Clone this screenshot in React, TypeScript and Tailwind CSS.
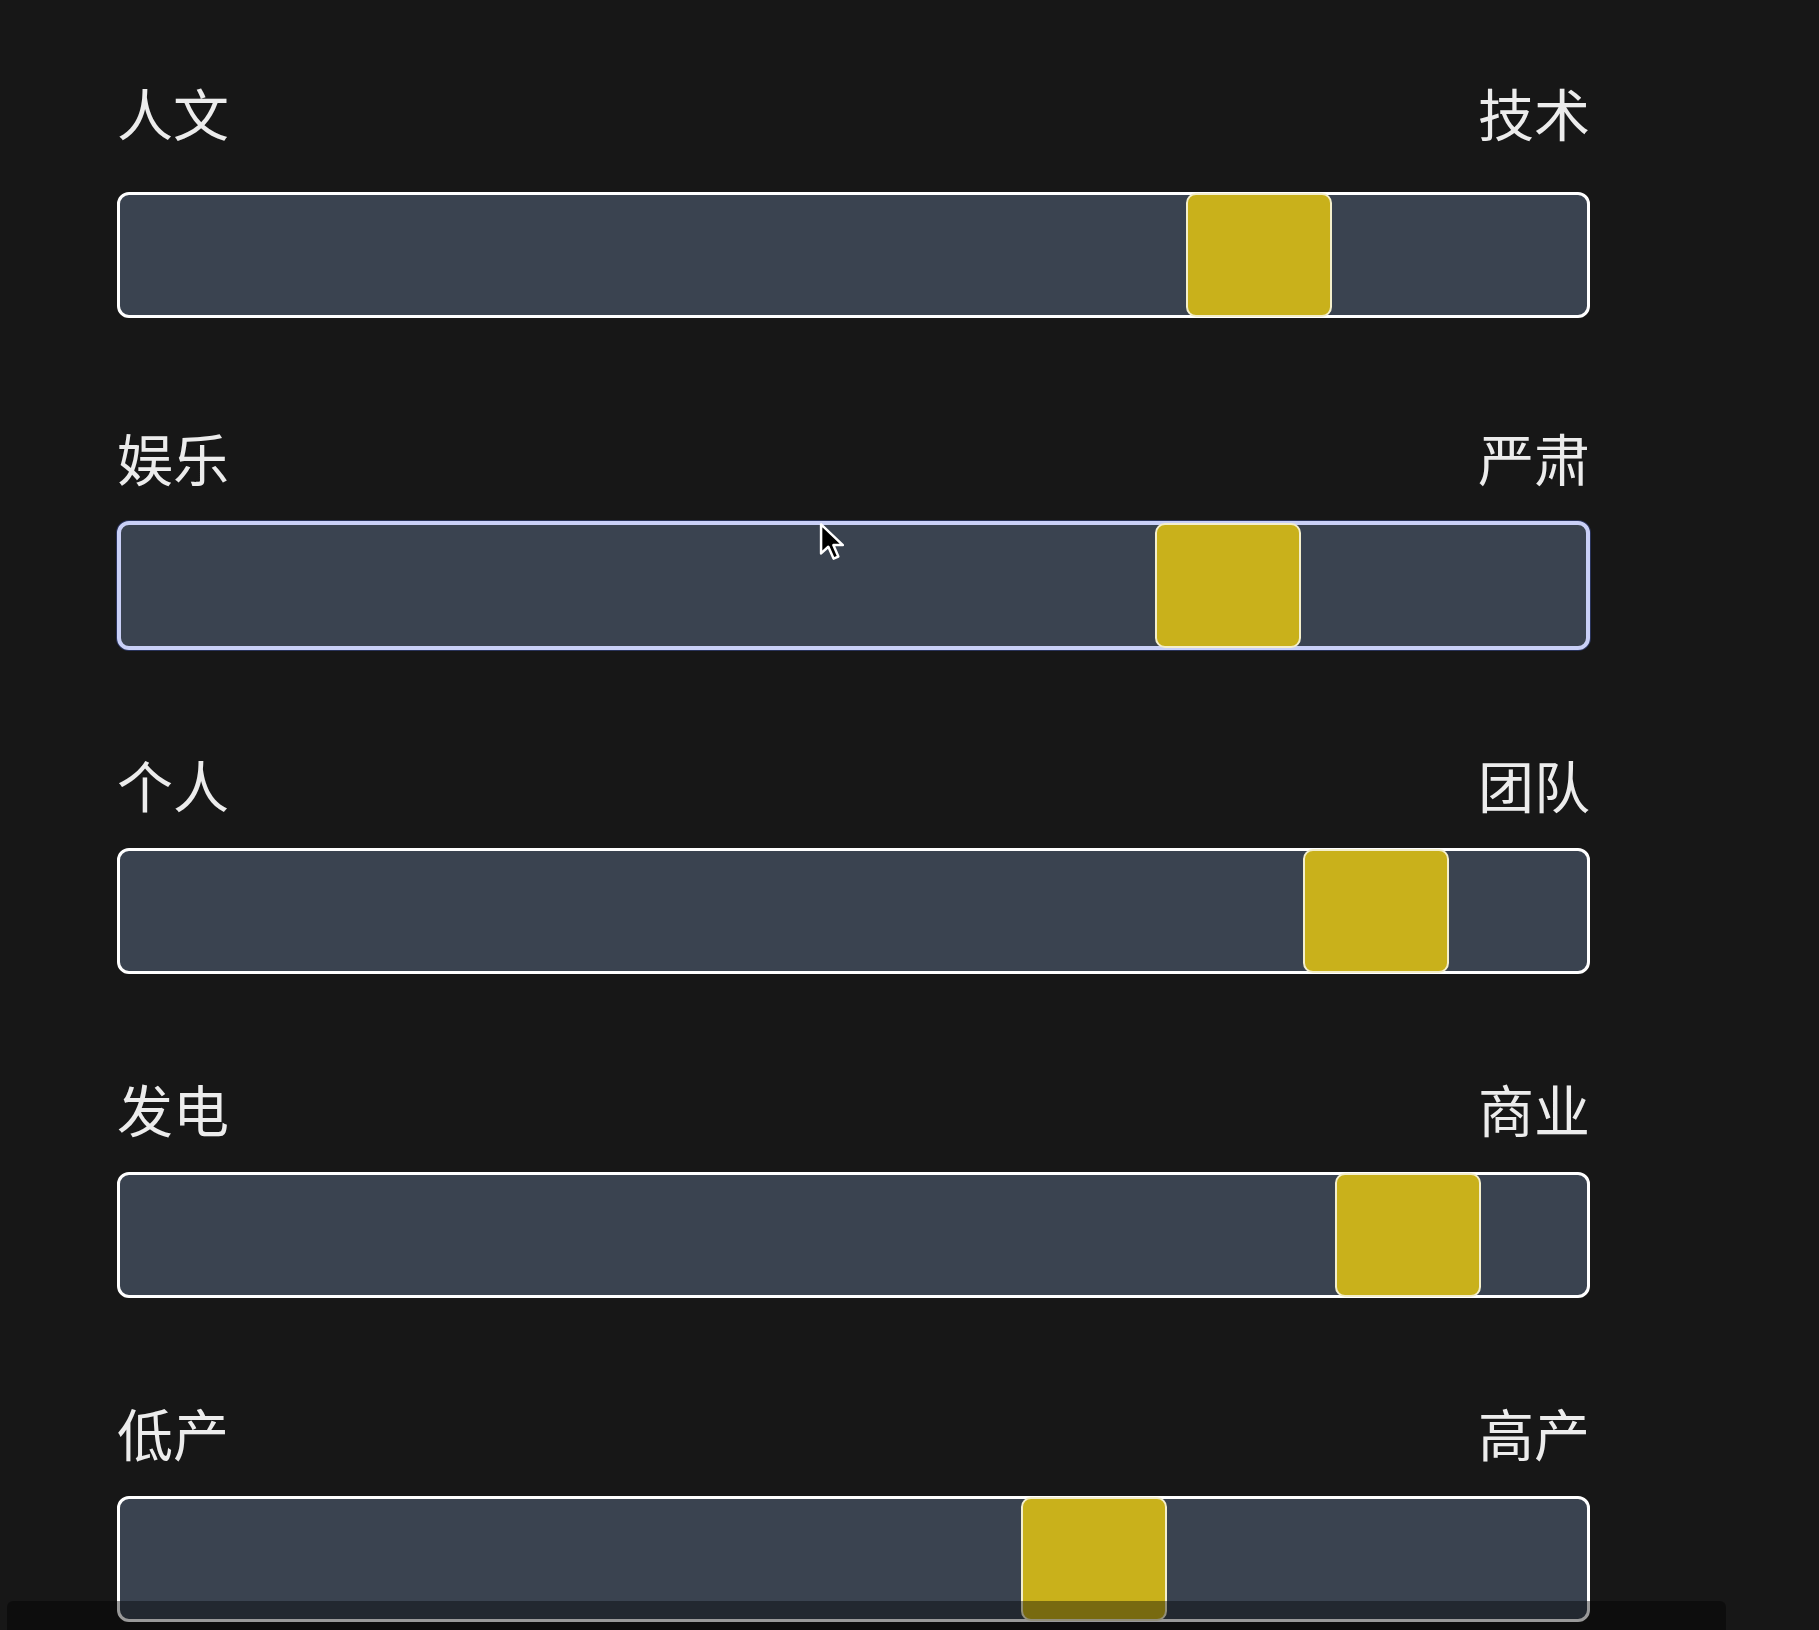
const sliders = [
  { left: "人文", right: "技术", pos: 1066 },
  { left: "娱乐", right: "严肃", pos: 1034, focused: true },
  { left: "个人", right: "团队", pos: 1183 },
  { left: "发电", right: "商业", pos: 1215 },
  { left: "低产", right: "高产", pos: 901 },
];

function Cursor() {
  return (
    <svg className="absolute left-[819px] top-[522px] w-[27px] h-[40px]" viewBox="0 0 13 19">
      <path
        d="M1 1 L1 15 L4.5 11.8 L7 17.5 L9.3 16.5 L6.9 11 L11.5 11 Z"
        fill="#000"
        stroke="#fff"
        strokeWidth="1.2"
        strokeLinejoin="round"
      />
    </svg>
  );
}

export default function App() {
  return (
    <div
      className="relative h-[1630px] w-full overflow-hidden bg-[#171717] text-[#ececec]"
      style={{ fontFamily: '"Noto Sans CJK SC", "Noto Sans", sans-serif' }}
    >
      <div className="ml-[117px] flex w-[1473px] flex-col gap-[106px] pt-[84px]">
        {sliders.map((s, i) => (
          <div key={s.left} className={i === 0 ? "mb-[5px] flex flex-col" : "flex flex-col"}>
            <div
              className={
                i === 0
                  ? "mb-[52px] flex justify-between text-[56px] leading-[56px]"
                  : "mb-[36px] flex justify-between text-[56px] leading-[56px]"
              }
            >
              <span>{s.left}</span>
              <span>{s.right}</span>
            </div>
            <div
              className={
                s.focused
                  ? "relative h-[129px] rounded-[12px] border-[4px] border-[#c9d0f7] bg-[#3a4350] shadow-[0_0_0_1px_rgba(60,80,160,0.5)]"
                  : "relative h-[126px] rounded-[12px] border-[3px] border-white bg-[#3a4350]"
              }
            >
              <div
                className="absolute top-[-2px] bottom-[-2px] w-[146px] rounded-[10px] border-2 border-[#f4efcc] bg-[#c9b11b]"
                style={{ left: s.pos }}
              />
            </div>
          </div>
        ))}
      </div>

      <Cursor />

      {/* player bar overlay */}
      <div className="absolute bottom-0 left-[7px] h-[29px] w-[1719px] rounded-t-[6px] bg-black/40" />
    </div>
  );
}
